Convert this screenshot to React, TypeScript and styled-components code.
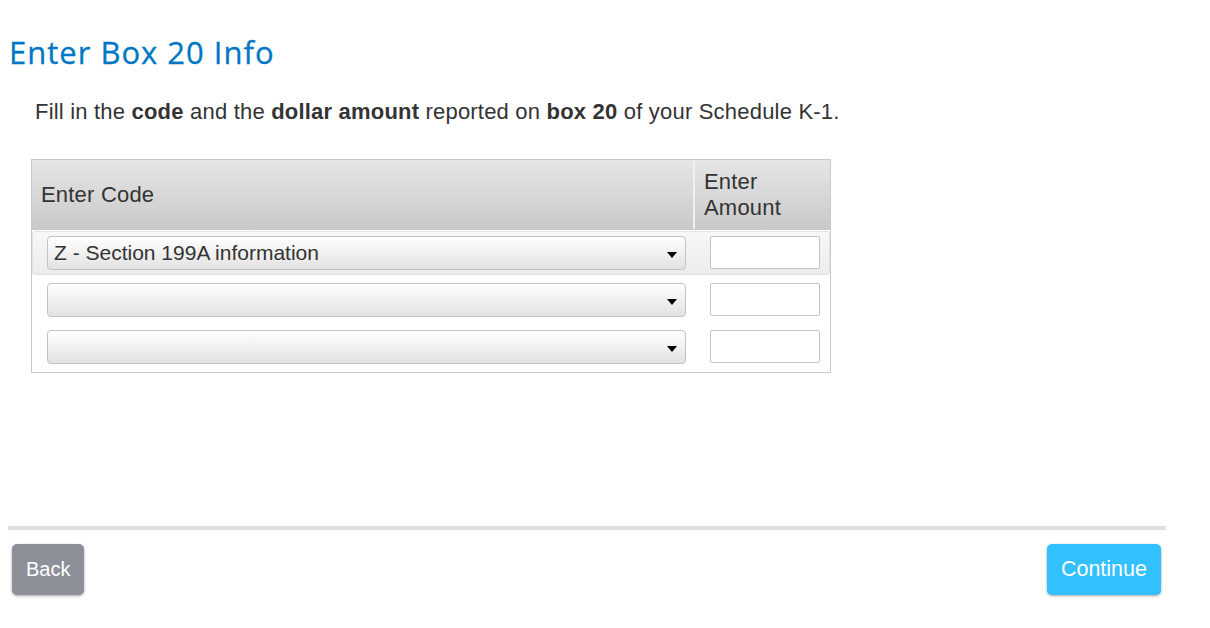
import React from "react";
import styled, { createGlobalStyle } from "styled-components";

const Global = createGlobalStyle`
  html, body { margin: 0; padding: 0; background: #fff; }
  body { font-family: "Liberation Sans", Arial, sans-serif; color: #333; }
`;

const Page = styled.div`
  width: 1210px;
  height: 628px;
  box-sizing: border-box;
  padding: 32px 44px 0 8px;
  display: flex;
  flex-direction: column;
`;

const Title = styled.h1`
  margin: 0 0 0 1px;
  font-family: "Open Sans", "Lato", sans-serif;
  font-weight: 500;
  font-size: 31px;
  letter-spacing: 1px;
  line-height: 40px;
  color: #0077c5;
  -webkit-text-stroke: 0.3px #0077c5;
`;

const Intro = styled.p`
  margin: 27px 0 0 27px;
  font-size: 22px;
  letter-spacing: 0.2px;
  line-height: 26px;
  color: #333;
  b { font-weight: 700; }
`;

const Grid = styled.div`
  margin: 34px 0 0 23px;
  width: 800px;
  box-sizing: border-box;
  border: 1px solid #c9c9c9;
  padding-bottom: 3px;
`;

const HeaderRow = styled.div`
  display: grid;
  grid-template-columns: 663px 1fr;
  height: 70px;
  box-sizing: border-box;
  border-bottom: 1px solid #c6c6c6;
`;

const HeaderCell = styled.div<{ $last?: boolean }>`
  background: linear-gradient(#e6e6e6, #c9c9c9);
  border-right: ${(p) => (p.$last ? "none" : "2px solid #f0f0f0")};
  display: flex;
  align-items: center;
  padding: 0 9px;
  font-size: 22px;
  letter-spacing: 0.2px;
  line-height: 26px;
  color: #333;
  box-sizing: border-box;
`;

const Row = styled.div<{ $active?: boolean }>`
  display: grid;
  grid-template-columns: 663px 1fr;
  align-items: start;
  height: ${(p) => (p.$active ? "44px" : "47px")};
  margin-top: ${(p) => (p.$active ? "1px" : "0")};
  padding-top: ${(p) => (p.$active ? "4px" : "7px")};
  box-sizing: border-box;
  border: 1px solid ${(p) => (p.$active ? "#e2e2e2" : "transparent")};
  border-radius: 3px;
  background: ${(p) => (p.$active ? "linear-gradient(#f7f7f7, #ececec)" : "transparent")};
`;

const SelectBox = styled.div`
  margin-left: 14px;
  width: 639px;
  height: 34px;
  box-sizing: border-box;
  border: 1px solid #c2c2c2;
  border-radius: 4px;
  background: linear-gradient(#ffffff, #e2e2e2);
  display: flex;
  align-items: center;
  justify-content: space-between;
  padding: 0 8px 0 6px;
  font-size: 21px;
  color: #333;
`;

const Caret = styled.span`
  width: 0;
  height: 0;
  border-left: 5px solid transparent;
  border-right: 5px solid transparent;
  border-top: 6px solid #000;
  margin-top: 3px;
`;

const AmountInput = styled.div`
  margin-left: 14px;
  width: 110px;
  height: 33px;
  box-sizing: border-box;
  border: 1px solid #c4c4c4;
  border-radius: 2px;
  background: #fff;
`;

const Spacer = styled.div`
  flex: 1;
`;

const Divider = styled.div`
  height: 4px;
  background: #dedede;
  width: 1158px;
`;

const Footer = styled.div`
  display: flex;
  justify-content: space-between;
  align-items: flex-start;
  padding: 14px 5px 0 4px;
  height: 98px;
  box-sizing: border-box;
`;

const Button = styled.button<{ $primary?: boolean }>`
  height: 51px;
  padding: 0 14px;
  border: none;
  border-radius: 5px;
  background: ${(p) => (p.$primary ? "#33c0ff" : "#8d9099")};
  color: #fff;
  font-family: "Liberation Sans", Arial, sans-serif;
  font-size: ${(p) => (p.$primary ? "21.5px" : "20px")};
  box-shadow: 0 1px 3px rgba(0, 0, 0, 0.35);
`;

const rows = ["Z - Section 199A information", "", ""];

export default function App() {
  return (
    <>
      <Global />
      <Page>
        <Title>Enter Box 20 Info</Title>
        <Intro>
          Fill in the <b>code</b> and the <b>dollar amount</b> reported on <b>box 20</b> of your
          Schedule K-1.
        </Intro>
        <Grid>
          <HeaderRow>
            <HeaderCell>Enter Code</HeaderCell>
            <HeaderCell $last>
              Enter
              <br />
              Amount
            </HeaderCell>
          </HeaderRow>
          {rows.map((r, i) => (
            <Row key={i} $active={i === 0}>
              <SelectBox>
                <span>{r}</span>
                <Caret />
              </SelectBox>
              <AmountInput />
            </Row>
          ))}
        </Grid>
        <Spacer />
        <Divider />
        <Footer>
          <Button>Back</Button>
          <Button $primary>Continue</Button>
        </Footer>
      </Page>
    </>
  );
}
